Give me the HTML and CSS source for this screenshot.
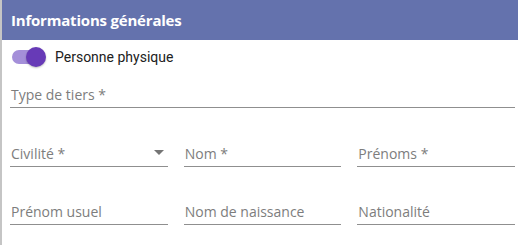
FILE: index.html
```html
<!DOCTYPE html>
<html lang="fr">
<head>
  <meta charset="UTF-8" />
  <title>Informations générales</title>
  <link rel="stylesheet" href="styles.css">
</head>
<body>
  <div class="panel">
    <div class="panel-header">Informations générales</div>
    <div class="panel-body">
      <label class="switch">
        <span class="switch-track"><span class="switch-thumb"></span></span>
        <span class="switch-label">Personne physique</span>
      </label>

      <div class="field full">
        <span class="field-label">Type de tiers *</span>
      </div>

      <div class="row">
        <div class="field select">
          <span class="field-label">Civilité *</span>
          <span class="caret"></span>
        </div>
        <div class="field">
          <span class="field-label">Nom *</span>
        </div>
        <div class="field">
          <span class="field-label">Prénoms *</span>
        </div>
      </div>

      <div class="row">
        <div class="field">
          <span class="field-label">Prénom usuel</span>
        </div>
        <div class="field">
          <span class="field-label">Nom de naissance</span>
        </div>
        <div class="field">
          <span class="field-label">Nationalité</span>
        </div>
      </div>
    </div>
  </div>
</body>
</html>
```

FILE: styles.css
```css
/* ===== Base ===== */
* {
  margin: 0;
  padding: 0;
  box-sizing: border-box;
}
html, body {
  height: 100%;
  background: #fff;
  font-family: 'Open Sans', sans-serif;
}
.panel {
  min-height: 100vh;
  border-left: 2px solid #c5c5c5;
}

/* ===== Header ===== */
.panel-header {
  height: 40px;
  background-color: #6472ad;
  color: #fff;
  font-weight: 700;
  font-size: 15px;
  line-height: 40px;
  padding-left: 9px;
  letter-spacing: -0.2px;
}

/* ===== Body ===== */
.panel-body {
  padding: 0 3px 0 8px;
}

/* toggle */
.switch {
  display: flex;
  align-items: center;
  height: 34px;
}
.switch-track {
  position: relative;
  width: 30px;
  height: 14px;
  border-radius: 7px;
  background-color: #a48fd9;
  margin-left: 2px;
}
.switch-thumb {
  position: absolute;
  top: -3px;
  right: -4px;
  width: 20px;
  height: 20px;
  border-radius: 50%;
  background-color: #673ab7;
  box-shadow: 0 1px 2px rgba(0,0,0,0.25);
}
.switch-label {
  margin-left: 13px;
  font-family: Roboto, sans-serif;
  font-size: 14px;
  color: #212121;
}

/* fields */
.field {
  position: relative;
  flex: 1;
  height: 34px;
  display: flex;
  align-items: flex-end;
  border-bottom: 1px solid #8f8f8f;
  padding: 0 0 3px 1px;
}
.field-label {
  font-size: 14px;
  color: #7d7d7d;
}
.row {
  display: flex;
  gap: 16px;
  margin-top: 25px;
}
.row + .row {
  margin-top: 24px;
}
.caret {
  position: absolute;
  right: 4px;
  bottom: 11px;
  width: 0;
  height: 0;
  border-left: 5px solid transparent;
  border-right: 5px solid transparent;
  border-top: 5px solid #757575;
}
```
